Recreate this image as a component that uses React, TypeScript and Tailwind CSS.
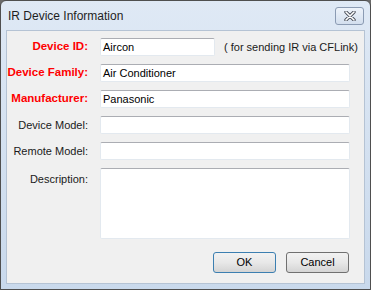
import React from 'react'

const rows = [
  { label: 'Device Family:', value: 'Air Conditioner', req: true },
  { label: 'Manufacturer:', value: 'Panasonic', req: true },
  { label: 'Device Model:', value: '', req: false },
  { label: 'Remote Model:', value: '', req: false },
]

function Field({ value, className = '' }: { value: string; className?: string }) {
  return (
    <div
      className={`h-[18px] bg-white border border-[#e3e9ef] border-t-[#abadb3] rounded-[2px] px-[2px] flex items-center text-[11px] text-black ${className}`}
    >
      {value}
    </div>
  )
}

function Label({ text, req }: { text: string; req: boolean }) {
  return (
    <div
      className={
        req
          ? 'h-[18px] flex items-center justify-end whitespace-nowrap text-[11.5px] font-bold text-[#ff0000]'
          : 'h-[18px] flex items-center justify-end whitespace-nowrap text-[11px] text-[#1a1a1a]'
      }
    >
      {text}
    </div>
  )
}

export default function App() {
  return (
    <div className="w-[371px] h-[290px] bg-[#6b6b6b] font-['Liberation_Sans',Arial,sans-serif]">
      <div className="w-full h-full border border-[#4f4f4f] rounded-t-[6px] bg-gradient-to-b from-[#dfe9f5] to-[#c9d9ec] flex flex-col">
        {/* Title bar */}
        <div className="h-[29px] flex items-center justify-between pl-[7px] pr-[6px]">
          <span className="text-[12px] text-[#1e1e1e]">IR Device Information</span>
          <div className="w-[29px] h-[18px] mt-[1px] rounded-[3px] border border-[#8b9bb3] bg-gradient-to-b from-[#eef3fa] to-[#d3dfee] flex items-center justify-center">
            <svg width="12" height="10" viewBox="0 0 12 10">
              <path d="M2 1 L10 9 M10 1 L2 9" stroke="#4a4f5a" strokeWidth="3.4" strokeLinecap="round" />
              <path d="M2 1 L10 9 M10 1 L2 9" stroke="#ffffff" strokeWidth="1.6" strokeLinecap="round" />
            </svg>
          </div>
        </div>

        {/* Client area */}
        <div className="flex-1 mx-[5px] mb-[5px] bg-[#f0f0f0] border border-[#b5c3d4] pt-[7px] flex flex-col">
          <div className="grid grid-cols-[81px_250px] gap-x-[12px] gap-y-[8px]">
            <Label text="Device ID:" req />
            <div className="flex items-center">
              <Field value="Aircon" className="w-[115px] shrink-0" />
              <span className="ml-[9px] whitespace-nowrap text-[11px] text-[#1a1a1a]">( for sending IR via CFLink)</span>
            </div>
            {rows.map((r) => (
              <React.Fragment key={r.label}>
                <Label text={r.label} req={r.req} />
                <Field value={r.value} />
              </React.Fragment>
            ))}
            <div className="flex justify-end pt-[3px] text-[11px] text-[#1a1a1a]">Description:</div>
            <div className="h-[71px] bg-white border border-[#e3e9ef] border-t-[#abadb3] rounded-[2px]" />
          </div>

          <div className="flex justify-end gap-[10px] pr-[15px] mt-[13px]">
            <button className="w-[63px] h-[21px] rounded-[3px] border border-[#3c7fb1] bg-gradient-to-b from-[#f2f2f2] via-[#e8e8e8] to-[#d4d4d4] text-[11px] text-black">
              OK
            </button>
            <button className="w-[63px] h-[21px] rounded-[3px] border border-[#707070] bg-gradient-to-b from-[#f2f2f2] via-[#e8e8e8] to-[#d4d4d4] text-[11px] text-black">
              Cancel
            </button>
          </div>
        </div>
      </div>
    </div>
  )
}
